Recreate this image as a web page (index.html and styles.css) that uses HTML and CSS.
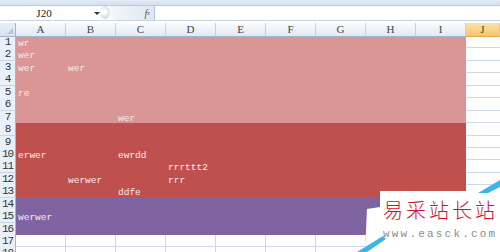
FILE: index.html
```html
<!DOCTYPE html>
<html lang="zh-CN">
<head>
    <meta charset="UTF-8">
    <title>Excel - fill colours</title>
    <link rel="stylesheet" href="styles.css">
</head>
<body>

    <div class="ribbon-edge"></div>

    <!-- Name box + formula bar -->
    <div class="formula-bar">
        <div class="name-box">
            <span class="name">J20</span>
            <span class="arrow"></span>
        </div>
        <div class="grip"></div>
        <div class="fx-btn"><i>f</i><sub>x</sub></div>
        <div class="formula-input"></div>
    </div>

    <div class="sheet">
        <div class="row head">
            <div class="corner"></div>
            <div class="col-h">A</div>
            <div class="col-h">B</div>
            <div class="col-h">C</div>
            <div class="col-h">D</div>
            <div class="col-h">E</div>
            <div class="col-h">F</div>
            <div class="col-h">G</div>
            <div class="col-h">H</div>
            <div class="col-h">I</div>
            <div class="col-h sel">J</div>
        </div>

        <div class="row pink"><div class="rh">1</div><span class="cell a">wr</span></div>
        <div class="row pink"><div class="rh">2</div><span class="cell a">wer</span></div>
        <div class="row pink"><div class="rh">3</div><span class="cell a">wer</span><span class="cell b">wer</span></div>
        <div class="row pink"><div class="rh">4</div></div>
        <div class="row pink"><div class="rh">5</div><span class="cell a">re</span></div>
        <div class="row pink"><div class="rh">6</div></div>
        <div class="row pink"><div class="rh">7</div><span class="cell c">wer</span></div>

        <div class="row red"><div class="rh">8</div></div>
        <div class="row red"><div class="rh">9</div></div>
        <div class="row red"><div class="rh">10</div><span class="cell a">erwer</span><span class="cell c">ewrdd</span></div>
        <div class="row red"><div class="rh">11</div><span class="cell d">rrrttt2</span></div>
        <div class="row red"><div class="rh">12</div><span class="cell b">werwer</span><span class="cell d">rrr</span></div>
        <div class="row red"><div class="rh">13</div><span class="cell c">ddfe</span></div>

        <div class="row purple"><div class="rh">14</div></div>
        <div class="row purple"><div class="rh">15</div><span class="cell a">werwer</span></div>
        <div class="row purple"><div class="rh">16</div></div>

        <div class="row"><div class="rh">17</div></div>
        <div class="row"><div class="rh">18</div></div>
    </div>

    <!-- site watermark, lies over the sheet -->
    <div class="watermark">
        <svg class="wm-bg" width="145" height="74" viewBox="0 0 145 74">
            <polygon points="25,13 145,13 145,74 10,74 12,31 25,29" fill="#ffffff"/>
            <polygon points="2,74 28,58 31,61 12,74" fill="#3fb4e6"/>
            <polygon points="123,15 145,2 145,9 133,15" fill="#3fb4e6"/>
        </svg>
        <div class="wm-title">易采站长站</div>
        <div class="wm-url">www.easck.com</div>
    </div>

</body>
</html>
```

FILE: styles.css
```css
:root {
    --grid-line: #d0d7e5;
    --head-line: #9eb6ce;
    --pink: #da9694;
    --red: #c0504d;
    --purple: #8064a2;
    --cell-text: #f6e9e8;
    --row-h: 12.44px;
}

body {
    margin: 0;
    width: 500px;
    height: 252px;
    overflow: hidden;
    background: #fff;
    position: relative;
    font-family: 'Liberation Mono', monospace;
}

.ribbon-edge {
    height: 5px;
    background: linear-gradient(#e3ecf7, #d3e0ef);
    border-bottom: 1px solid #b7cbe3;
}

/* Formula bar */
.formula-bar {
    display: flex;
    height: 14px;
    background: #fff;
    border-bottom: 1px solid #c9d5e4;
    margin-bottom: 2px;
}

.name-box {
    width: 102px;
    display: flex;
    align-items: center;
    position: relative;
}

.name {
    width: 88px;
    text-align: center;
    font-family: 'Liberation Serif', serif;
    font-size: 11px;
    color: #222;
}

.arrow {
    margin-left: 6px;
    border-left: 3px solid transparent;
    border-right: 3px solid transparent;
    border-top: 3px solid #333;
}

.grip {
    width: 10px;
    height: 13px;
    margin-left: -2px;
    border-radius: 50%;
    background: radial-gradient(circle at 40% 45%, #ffffff 20%, #cdd9e7 70%, #aebfd4 100%);
}

.fx-btn {
    width: 44px;
    display: flex;
    justify-content: flex-end;
    align-items: center;
    padding-right: 4px;
    box-sizing: border-box;
    background: linear-gradient(90deg, #f4f7fb, #dde7f2);
    border-radius: 0 0 0 6px;
    font-family: 'Liberation Serif', serif;
    font-size: 10px;
    color: #555;
}

.fx-btn sub {
    font-size: 6px;
    font-style: italic;
}

.formula-input {
    flex: 1;
    border-left: 1px solid #b3c5dc;
}

/* Sheet grid */
.row {
    --fill: transparent;
    display: grid;
    grid-template-columns: 16px repeat(9, 50px) 34px;
    height: var(--row-h);
    background:
        linear-gradient(var(--fill), var(--fill)) 16px 0 / 450px 100% no-repeat,
        linear-gradient(to top, var(--grid-line) 1px, transparent 1px),
        repeating-linear-gradient(90deg, transparent 0 49px, var(--grid-line) 49px 50px) 16px 0 / 484px 100% no-repeat,
        #fff;
}

.row.pink { --fill: var(--pink); }
.row.red { --fill: var(--red); }
.row.purple { --fill: var(--purple); }

.row.head {
    height: 13px;
    background: none;
}

.corner {
    background: linear-gradient(#e9eff7, #d7e2ee);
    border-right: 1px solid var(--head-line);
    border-bottom: 1px solid var(--head-line);
    position: relative;
}

.corner::after {
    content: "";
    position: absolute;
    right: 2px;
    bottom: 2px;
    border-left: 6px solid transparent;
    border-bottom: 6px solid #b6c7dc;
}

.col-h {
    background: linear-gradient(#f9fbfd, #e2e9f2);
    border-right: 1px solid #c3d2e3;
    border-bottom: 1px solid var(--head-line);
    font-family: 'Liberation Serif', serif;
    font-size: 11px;
    line-height: 13px;
    text-align: center;
    color: #444;
}

.col-h.sel {
    background: linear-gradient(#fbe3aa, #f6c56a);
    border-bottom-color: #e0a94a;
}

.rh {
    grid-column: 1;
    grid-row: 1;
    background: #eaf0f8;
    border-right: 1px solid var(--head-line);
    border-bottom: 1px solid #c8d6e8;
    box-sizing: border-box;
    font-family: 'Liberation Mono', monospace;
    font-size: 11px;
    line-height: 12px;
    text-align: center;
    color: #333;
    letter-spacing: -1px;
}

.cell {
    grid-row: 1;
    align-self: end;
    padding-left: 2px;
    font-size: 9.5px;
    line-height: 11px;
    white-space: nowrap;
    color: var(--cell-text);
}

.cell.a { grid-column: 2; }
.cell.b { grid-column: 3; }
.cell.c { grid-column: 4; }
.cell.d { grid-column: 5; }

/* Watermark */
.watermark {
    position: absolute;
    left: 355px;
    top: 178px;
    width: 145px;
    height: 74px;
    box-sizing: border-box;
    padding: 20px 0 0 28px;
}

.wm-bg {
    position: absolute;
    left: 0;
    top: 0;
}

.wm-title {
    position: relative;
    font-family: 'Noto Sans CJK SC', sans-serif;
    font-size: 20px;
    line-height: 24px;
    letter-spacing: 3px;
    color: #cc1133;
    font-weight: 300;
}

.wm-url {
    position: relative;
    margin-top: 6px;
    font-family: 'Liberation Mono', monospace;
    font-size: 11px;
    line-height: 12px;
    letter-spacing: 2.2px;
    color: #8c8c8c;
}
```
